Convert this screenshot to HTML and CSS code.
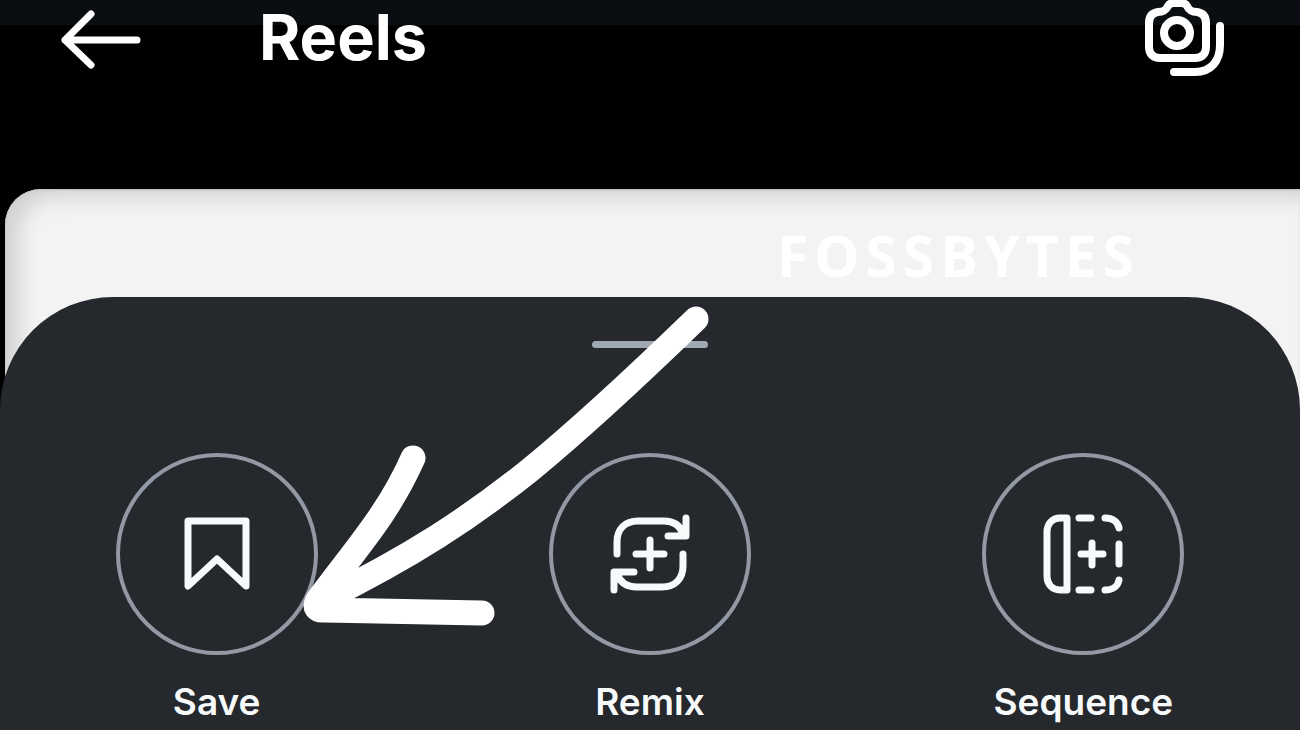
FILE: index.html
```html
<!DOCTYPE html>
<html lang="en">
<head>
<meta charset="utf-8">
<meta name="viewport" content="width=device-width, initial-scale=1">
<title>Reels</title>
<link rel="stylesheet" href="styles.css">
</head>
<body>
<header class="topbar">
  <button class="icon-button" type="button" aria-label="Back">
    <svg class="back-icon" viewBox="0 0 80 60" aria-hidden="true"><path d="M30 4 4 30l26 25M4 30h72"/></svg>
  </button>
  <h1 class="title">Reels</h1>
  <button class="icon-button" type="button" aria-label="Camera">
    <svg class="camera-icon" viewBox="0 0 80 76" aria-hidden="true">
      <path d="M13 12c6 0 8-2 10-6 1-2 3-3 6-3h7c3 0 5 1 6 3 2 4 4 6 10 6 6 1 9 5 9 11v24c0 7-4 11-11 11H15C8 58 4 54 4 47V23c0-6 3-10 9-11z"/>
      <circle cx="32" cy="33" r="13"/>
      <path d="M75 26v19c0 16-9 27-25 27H29"/>
    </svg>
  </button>
</header>
<main class="stage">
  <section class="video"><p class="watermark">FOSSBYTES</p></section>
  <section class="sheet" aria-label="Reel options">
    <div class="handle"></div>
    <div class="actions">
      <button class="action" type="button">
        <span class="ring"><svg class="action-icon" viewBox="0 0 84 84" aria-hidden="true"><path d="M13 9h58v65L42 47 13 74z"/></svg></span>
        <span class="label">Save</span>
      </button>
      <button class="action" type="button">
        <span class="ring"><svg class="action-icon" viewBox="0 0 84 84" aria-hidden="true"><path d="M9 42V30C9 17 17 9 30 9h26c10 0 16 4 19 13M78 6v18H60M75 42v12c0 13-8 21-21 21H29c-10 0-17-5-20-13M6 78V60h20M42 28v28M28 42h28"/></svg></span>
        <span class="label">Remix</span>
      </button>
      <button class="action" type="button">
        <span class="ring"><svg class="action-icon" viewBox="0 0 84 84" aria-hidden="true"><path d="M26 6v72h-7C11 78 6 72 6 64V20C6 12 11 6 19 6zM38 6h12M64 6c8 0 13 4 14 10M78 32v20M78 68c-1 6-6 10-14 10M38 78h12M51 31v22M40 42h22"/></svg></span>
        <span class="label">Sequence</span>
      </button>
    </div>
    <svg class="pointer" viewBox="0 0 1300 433" aria-hidden="true"><path d="M696 22C633 83 580 132 530 173C470 221 412 259 323 303M413 161C388 217 358 249 318 303Q312 314 325 313L482 316"/></svg>
  </section>
</main>
</body>
</html>
```
FILE: styles.css
```css
* {
  box-sizing: border-box;
}

body {
  margin: 0;
  min-height: 100vh;
  overflow: hidden;
  background: #000;
  color: #fff;
  font-family: Inter, "Liberation Sans", sans-serif;
}

button {
  padding: 0;
  border: 0;
  background: none;
  color: inherit;
  font: inherit;
}

svg {
  display: block;
  fill: none;
  stroke: currentColor;
  stroke-width: 7px;
  stroke-linecap: round;
  stroke-linejoin: round;
}

.topbar {
  display: flex;
  align-items: flex-start;
  height: 189px;
  padding: 0 75px 0 61px;
  background: linear-gradient(#0a0d12 25px, #000 25px);
}

.back-icon {
  width: 80px;
  height: 60px;
  margin-top: 10px;
}

.title {
  flex: 1;
  margin: 0 0 0 118px;
  font-size: 63px;
  font-weight: 700;
  line-height: 74px;
}

.camera-icon {
  width: 80px;
  height: 76px;
  stroke-width: 8px;
}

.video {
  height: 221px;
  margin-left: 5px;
  padding: 28px 160px 0 0;
  border-top-left-radius: 36px;
  background: #f3f3f3;
  box-shadow: inset 14px 8px 20px #d2d2d2, inset 1px 1px 2px #777;
}

.watermark {
  margin: 0;
  color: #fff;
  font-family: "Noto Sans", sans-serif;
  font-size: 57px;
  font-weight: 700;
  letter-spacing: 6px;
  line-height: 76px;
  text-align: right;
}

.sheet {
  position: relative;
  min-height: 433px;
  margin-top: -113px;
  padding-top: 44px;
  border-radius: 113px 113px 0 0;
  background: #25282d;
}

.handle {
  width: 116px;
  height: 7px;
  margin: 0 auto;
  border-radius: 4px;
  background: #a0a8b4;
}

.actions {
  display: grid;
  grid-template-columns: repeat(3, 1fr);
  margin-top: 105px;
  color: #f7fafa;
}

.action {
  display: flex;
  flex-direction: column;
  align-items: center;
  gap: 25px;
}

.ring {
  display: grid;
  place-items: center;
  width: 202px;
  height: 202px;
  border: 4px solid #9299a5;
  border-radius: 50%;
}

.action-icon {
  width: 84px;
  height: 84px;
}

.label {
  font-size: 37px;
  font-weight: 600;
  line-height: 44px;
}

.pointer {
  position: absolute;
  top: 0;
  left: 0;
  width: 100%;
  pointer-events: none;
  stroke-width: 25px;
}
```
